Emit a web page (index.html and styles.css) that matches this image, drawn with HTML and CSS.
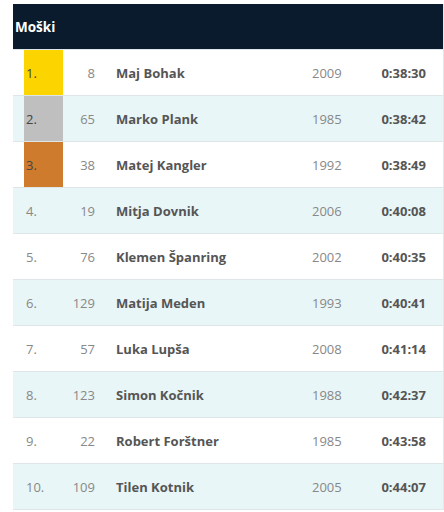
FILE: index.html
```html
<!DOCTYPE html>
<html>
<head>
<meta charset="utf-8">
<link rel="stylesheet" href="styles.css">
</head>
<body>
<div class="table">
  <div class="head">Moški</div>
  <div class="row"><div class="rank gold">1.</div><div class="bib">8</div><div class="name">Maj Bohak</div><div class="year">2009</div><div class="time">0:38:30</div></div>
  <div class="row alt"><div class="rank silver">2.</div><div class="bib">65</div><div class="name">Marko Plank</div><div class="year">1985</div><div class="time">0:38:42</div></div>
  <div class="row"><div class="rank bronze">3.</div><div class="bib">38</div><div class="name">Matej Kangler</div><div class="year">1992</div><div class="time">0:38:49</div></div>
  <div class="row alt"><div class="rank">4.</div><div class="bib">19</div><div class="name">Mitja Dovnik</div><div class="year">2006</div><div class="time">0:40:08</div></div>
  <div class="row"><div class="rank">5.</div><div class="bib">76</div><div class="name">Klemen Španring</div><div class="year">2002</div><div class="time">0:40:35</div></div>
  <div class="row alt"><div class="rank">6.</div><div class="bib">129</div><div class="name">Matija Meden</div><div class="year">1993</div><div class="time">0:40:41</div></div>
  <div class="row"><div class="rank">7.</div><div class="bib">57</div><div class="name">Luka Lupša</div><div class="year">2008</div><div class="time">0:41:14</div></div>
  <div class="row alt"><div class="rank">8.</div><div class="bib">123</div><div class="name">Simon Kočnik</div><div class="year">1988</div><div class="time">0:42:37</div></div>
  <div class="row"><div class="rank">9.</div><div class="bib">22</div><div class="name">Robert Forštner</div><div class="year">1985</div><div class="time">0:43:58</div></div>
  <div class="row alt last"><div class="rank">10.</div><div class="bib">109</div><div class="name">Tilen Kotnik</div><div class="year">2005</div><div class="time">0:44:07</div></div>
</div>
</body>
</html>
```
FILE: styles.css
```css
html, body {
  margin: 0;
  background: #ffffff;
}
body {
  padding: 4px 1px 0 13px;
  font-family: "Open Sans", "DejaVu Sans", sans-serif;
  font-size: 13px;
  color: #777;
}
.table {
  width: 430px;
  border-right: 1px solid #e4e8ea;
}
.head {
  height: 45px;
  background: #0b1b2e;
  color: #fff;
  font-weight: 700;
  font-size: 13.5px;
  display: flex;
  align-items: center;
  padding-left: 2px;
}
.row {
  display: grid;
  grid-template-columns: 39px 32px 1fr 53px 61px;
  padding: 0 17px 0 11px;
  height: 45px;
  border-top: 1px solid #dfe6e8;
  align-items: center;
  background: #fff;
}
.row.alt {
  background: #e8f6f7;
}
.row.last {
  border-bottom: 1px solid #dfe6e8;
}
.rank {
  height: 100%;
  display: flex;
  align-items: center;
  padding-left: 2px;
  color: #888;
}
.gold { background: #fcd500; color: #444; }
.silver { background: #bfbfbf; color: #444; }
.bronze { background: #cf7b2e; color: #444; }
.bib {
  text-align: right;
  color: #888;
}
.name {
  padding-left: 21px;
  font-weight: 700;
  color: #555;
}
.year {
  color: #888;
}
.time {
  text-align: right;
  font-weight: 700;
  color: #555;
}
```
